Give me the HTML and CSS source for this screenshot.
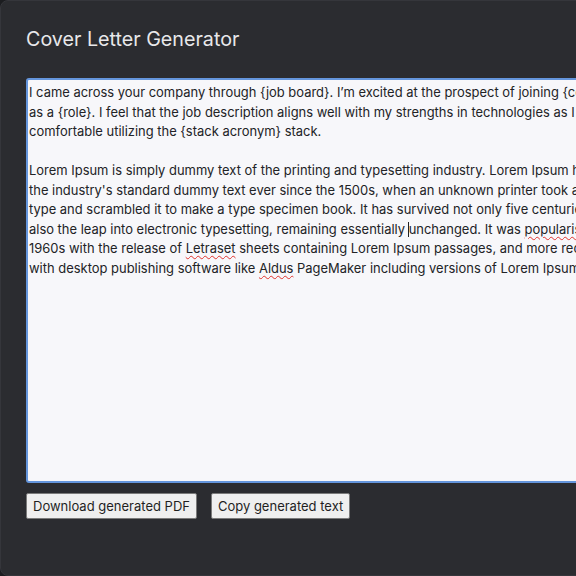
FILE: index.html
```html
<!DOCTYPE html>
<html lang="en">
<head>
<meta charset="utf-8">
<title>Cover Letter Generator</title>
<link rel="stylesheet" href="styles.css">
</head>
<body>
<main class="card">
  <h1 class="title">Cover Letter Generator</h1>
  <div class="editor">I came across your company through {job board}. I’m excited at the prospect of joining {company} and contributing
as a {role}. I feel that the job description aligns well with my strengths in technologies as I am particularly
comfortable utilizing the {stack acronym} stack.

Lorem Ipsum is simply dummy text of the printing and typesetting industry. Lorem Ipsum has been
the industry's standard dummy text ever since the 1500s, when an unknown printer took a galley of
type and scrambled it to make a type specimen book. It has survived not only five centuries, but
also the leap into electronic typesetting, remaining essentially <span class="caret"></span>unchanged. It was <span class="spell">popularised</span> in the
1960s with the release of <span class="spell">Letraset</span> sheets containing Lorem Ipsum passages, and more recently
with desktop publishing software like <span class="spell">Aldus</span> PageMaker including versions of Lorem Ipsum.</div>
  <div class="actions">
    <button class="btn" type="button">Download generated PDF</button>
    <button class="btn" type="button">Copy generated text</button>
  </div>
</main>
</body>
</html>
```
FILE: styles.css
```css
html, body {
  margin: 0;
  padding: 0;
  background: #1c1d20;
  overflow: hidden;
  width: 576px;
  height: 576px;
}
.card {
  width: 760px;
  box-sizing: border-box;
  background: #2b2c30;
  border: 1px solid #35363b;
  border-radius: 8px;
  padding: 25px 25px 56px 25px;
  font-family: Inter, "Noto Sans", sans-serif;
}
.title {
  margin: 0;
  font-size: 19.7px;
  line-height: 26px;
  font-weight: 400;
  color: #e8e8ea;
}
.editor {
  margin-top: 26px;
  height: 396px;
  box-sizing: content-box;
  border: 2px solid #6495dc;
  border-radius: 3px;
  background: #f7f7fa;
  padding: 3px 2px 2px 1px;
  white-space: pre;
  overflow: hidden;
  color: #222326;
  font-size: 12.95px;
  line-height: 19.5px;
}
.caret {
  display: inline-block;
  width: 1px;
  height: 15px;
  margin-left: -1px;
  background: #222;
  vertical-align: -3px;
}
.spell {
  text-decoration: underline wavy #e0332e;
  text-decoration-thickness: 1px;
  text-underline-offset: 2px;
}
.actions {
  display: flex;
  gap: 14px;
  margin-top: 10px;
}
.btn {
  font-family: Inter, "Noto Sans", sans-serif;
  font-size: 13px;
  color: #1f1f1f;
  background: #efefef;
  border: 1px solid #7a7a7a;
  border-radius: 2px;
  padding: 4px 6px;
  line-height: 16px;
}
```
